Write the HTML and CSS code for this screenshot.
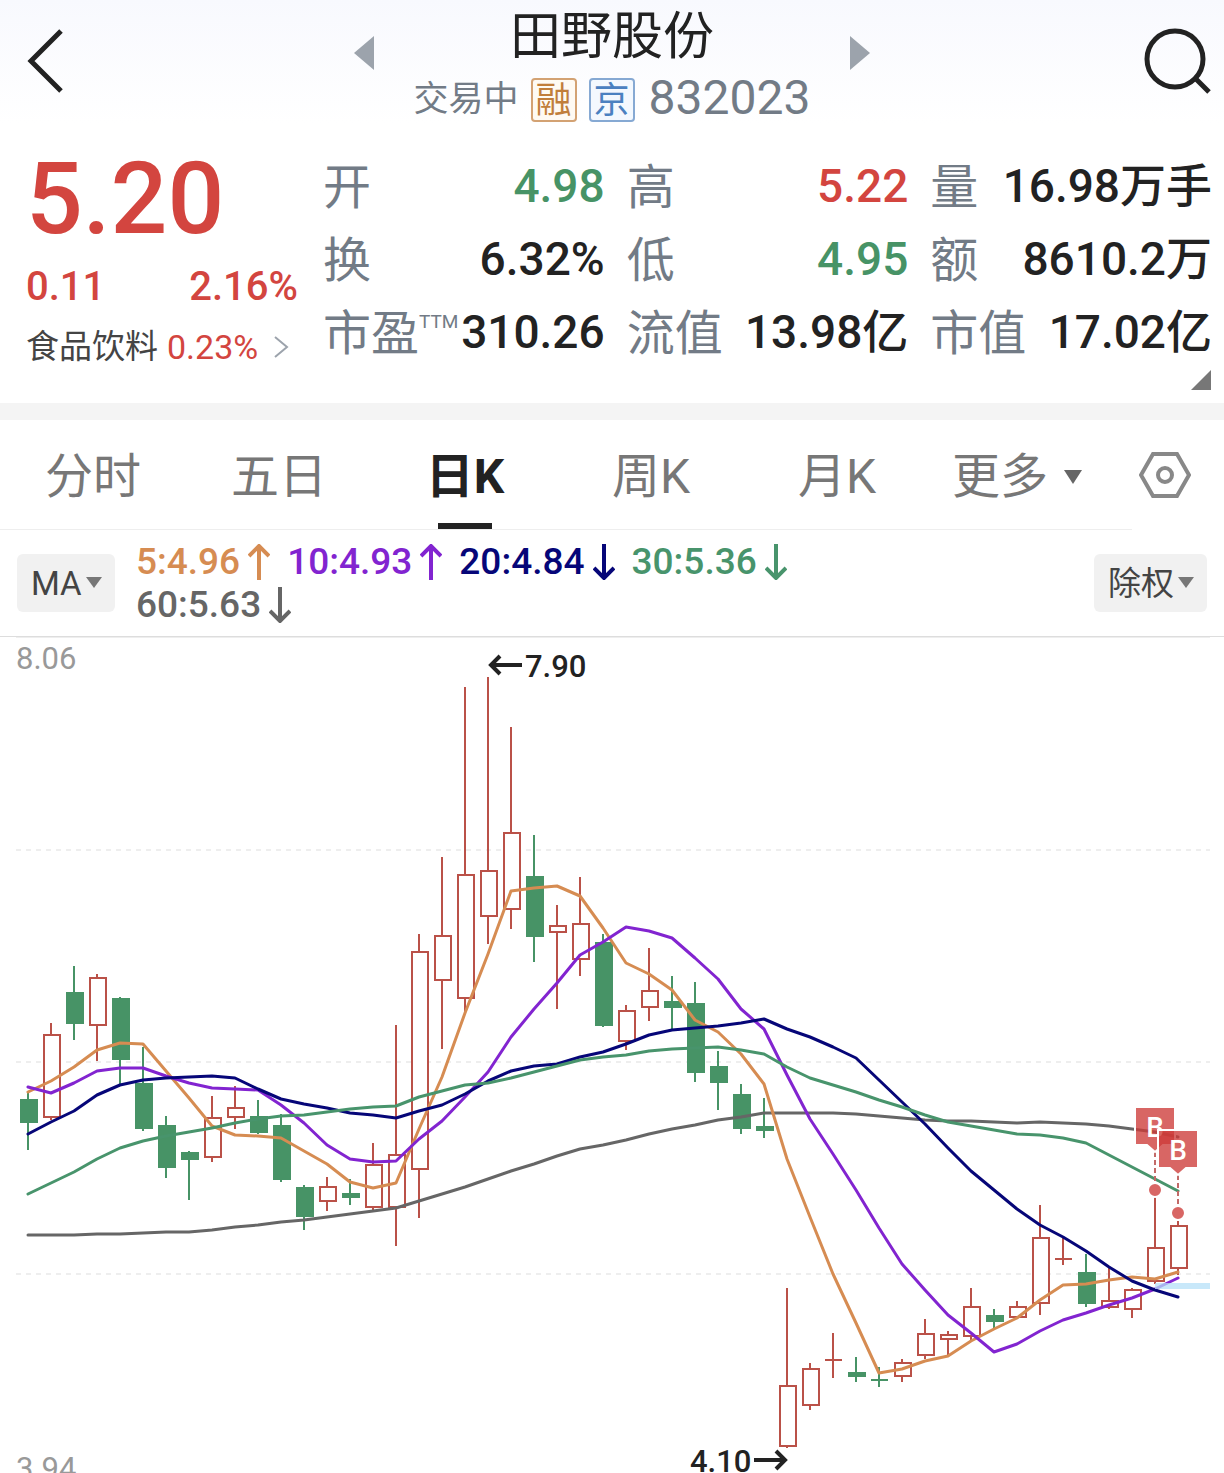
FILE: index.html
```html
<!DOCTYPE html>
<html lang="zh-CN">
<head>
  <meta charset="utf-8">
  <meta name="viewport" content="width=device-width, initial-scale=1">
  <title>田野股份 832023</title>
  <link rel="stylesheet" href="styles.css">
</head>
<body>
  <header class="header">
    <button class="back" aria-label="返回">
      <svg width="40" height="66" viewBox="0 0 40 66"><path d="M35 2 5 32l30 30"/></svg>
    </button>
    <div class="stock">
      <button class="switch" aria-label="上一只">
        <svg width="20" height="34" viewBox="0 0 20 34"><path d="M20 0v34L0 17z"/></svg>
      </button>
      <div class="stock-info">
        <h1>田野股份</h1>
        <div class="stock-meta">
          <span class="status">交易中</span>
          <span class="badge badge-margin">融</span>
          <span class="badge badge-market">京</span>
          <span class="code">832023</span>
        </div>
      </div>
      <button class="switch" aria-label="下一只">
        <svg width="20" height="34" viewBox="0 0 20 34"><path d="M0 0v34l20-17z"/></svg>
      </button>
    </div>
    <button class="search" aria-label="搜索">
      <svg width="68" height="68" viewBox="0 0 68 68"><circle cx="31" cy="31" r="28"/><path d="m51 50 14 14"/></svg>
    </button>
  </header>

  <section class="quote">
    <div class="price">
      <div class="price-now">5.20</div>
      <div class="price-change"><span>0.11</span><span>2.16%</span></div>
      <a class="industry" href="#industry">
        <span>食品饮料</span>
        <span class="industry-rate">0.23%</span>
        <svg width="16" height="24" viewBox="0 0 16 24"><path d="m2 2 12 10L2 22"/></svg>
      </a>
    </div>
    <dl class="stats">
      <div class="stat"><dt>开</dt><dd class="down">4.98</dd></div>
      <div class="stat"><dt>高</dt><dd class="up">5.22</dd></div>
      <div class="stat"><dt>量</dt><dd>16.98万手</dd></div>
      <div class="stat"><dt>换</dt><dd>6.32%</dd></div>
      <div class="stat"><dt>低</dt><dd class="down">4.95</dd></div>
      <div class="stat"><dt>额</dt><dd>8610.2万</dd></div>
      <div class="stat"><dt>市盈<sup>TTM</sup></dt><dd>310.26</dd></div>
      <div class="stat"><dt>流值</dt><dd>13.98亿</dd></div>
      <div class="stat"><dt>市值</dt><dd>17.02亿</dd></div>
    </dl>
  </section>
  <div class="expand">
    <button aria-label="展开">
      <svg width="20" height="20" viewBox="0 0 20 20"><path d="M20 0v20H0z"/></svg>
    </button>
  </div>

  <nav class="periods">
    <div class="tabs">
      <button class="tab">分时</button>
      <button class="tab">五日</button>
      <button class="tab active">日K</button>
      <button class="tab">周K</button>
      <button class="tab">月K</button>
      <button class="tab more" aria-haspopup="true">更多
        <svg width="18" height="14" viewBox="0 0 18 14"><path d="M0 0h18L9 14z"/></svg>
      </button>
    </div>
    <button class="settings" aria-label="设置">
      <svg width="52" height="46" viewBox="0 0 52 46"><path d="M14 2h24l12 21-12 21H14L2 23z"/><circle cx="26" cy="23" r="7"/></svg>
    </button>
  </nav>

  <section class="indicators">
    <div class="picker">
      <select aria-label="指标"><option>MA</option></select>
      <svg width="16" height="11" viewBox="0 0 16 11"><path d="M0 0h16L8 11z"/></svg>
    </div>
    <ul class="averages">
      <li class="ma5">5:4.96<svg class="arrow" viewBox="0 0 22 36"><path d="M11 36V2M1 12 11 2l10 10"/></svg></li>
      <li class="ma10">10:4.93<svg class="arrow" viewBox="0 0 22 36"><path d="M11 36V2M1 12 11 2l10 10"/></svg></li>
      <li class="ma20">20:4.84<svg class="arrow" viewBox="0 0 22 36"><path d="M11 0v34M1 24l10 10 10-10"/></svg></li>
      <li class="ma30">30:5.36<svg class="arrow" viewBox="0 0 22 36"><path d="M11 0v34M1 24l10 10 10-10"/></svg></li>
      <li class="ma60">60:5.63<svg class="arrow" viewBox="0 0 22 36"><path d="M11 0v34M1 24l10 10 10-10"/></svg></li>
    </ul>
    <div class="picker">
      <select aria-label="复权"><option>除权</option></select>
      <svg width="16" height="11" viewBox="0 0 16 11"><path d="M0 0h16L8 11z"/></svg>
    </div>
  </section>

  <svg class="chart" viewBox="0 637 1224 836">
    <path class="frame" d="M16 637.5h1194"/>
    <path class="grid" d="M16 850h1194M16 1062h1194M16 1274h1194"/>
    <g id="candles"></g>
    <g id="lines"></g>
    <rect class="last-price" x="1155" y="1283" width="55" height="6"/>
    <g id="markers"></g>
    <text class="axis" x="16" y="669">8.06</text>
    <text class="axis" x="16" y="1479">3.94</text>
    <text class="extreme" x="525" y="677">7.90</text>
    <path class="pointer" d="M522 665h-31m9-9-9 9 9 9"/>
    <text class="extreme" x="690" y="1472">4.10</text>
    <path class="pointer" d="M754 1460h31m-9-9 9 9-9 9"/>
  </svg>
  <script src="chart.js"></script>
</body>
</html>
```
FILE: styles.css
```css
:root {
  --up: #d3453f;
  --down: #479366;
  --ink: #222;
  --label: #727b86;
  --muted: #777;
}

* {
  box-sizing: border-box;
}

body {
  margin: 0;
  background: #fff;
  color: var(--ink);
  font-family: Roboto, "Noto Sans CJK SC", sans-serif;
}

button,
select {
  border: none;
  background: none;
  padding: 0;
  margin: 0;
  font: inherit;
  color: inherit;
  cursor: pointer;
}

svg {
  display: block;
  flex: none;
}

/* header */
.header {
  display: grid;
  grid-template-columns: 1fr auto 1fr;
  align-items: center;
  padding: 0 12px 0 26px;
  background: linear-gradient(#f8f9fe, #fff);
}

.back,
.search {
  fill: none;
  stroke: var(--ink);
  stroke-width: 5px;
}

.back {
  justify-self: start;
}

.search {
  justify-self: end;
}

.stock {
  display: flex;
  gap: 40px;
  padding-top: 8px;
  margin-right: 14px;
  justify-self: center;
}

.switch {
  align-self: flex-start;
  padding-top: 28px;
  fill: #9ca3ac;
}

.stock-info {
  text-align: center;
}

h1 {
  margin: 0 0 10px;
  font-size: 51px;
  font-weight: 400;
  line-height: 58px;
}

.stock-meta {
  display: flex;
  align-items: center;
  gap: 12px;
  height: 48px;
  color: var(--label);
}

.status {
  font-size: 35px;
  line-height: 44px;
}

.badge {
  width: 46px;
  height: 44px;
  border: 2px solid;
  border-radius: 4px;
  font-size: 36px;
  line-height: 42px;
}

.badge-margin {
  color: #c17e3b;
  border-color: #d3a273;
  background: #fefaf3;
}

.badge-market {
  color: #4a80c0;
  border-color: #86a9d3;
  background: #f3f8fe;
}

.code {
  align-self: flex-start;
  margin-left: 2px;
  font-size: 48px;
  line-height: 44px;
}

/* quote */
.quote {
  display: flex;
  gap: 25px;
  padding: 27px 12px 0 26px;
}

.price {
  width: 272px;
  color: var(--up);
}

.price-now {
  font-size: 100px;
  font-weight: 500;
  line-height: 96px;
}

.price-change {
  display: flex;
  justify-content: space-between;
  margin: 12px 0;
  font-size: 40px;
  font-weight: 500;
  line-height: 56px;
}

.industry {
  display: flex;
  align-items: center;
  gap: 9px;
  color: #444;
  font-size: 33px;
  line-height: 40px;
  text-decoration: none;
}

.industry-rate {
  color: var(--up);
  font-size: 34px;
}

.industry svg {
  margin-left: 6px;
  fill: none;
  stroke: #9ca3ac;
  stroke-width: 2px;
}

.stats {
  flex: 1;
  display: grid;
  grid-template-columns: repeat(3, minmax(0, 1fr));
  column-gap: 22px;
  margin: 0;
}

.stat {
  display: flex;
  justify-content: space-between;
  font-size: 48px;
  line-height: 73px;
  white-space: nowrap;
}

.stat dt {
  display: flex;
  color: var(--label);
}

.stat sup {
  font-size: 19px;
  line-height: 49px;
}

.stat dd {
  margin: 0;
  font-size: 46px;
  font-weight: 500;
  line-height: 71px;
}

.stat .up {
  color: var(--up);
}

.stat .down {
  color: var(--down);
}

.expand {
  display: flex;
  justify-content: flex-end;
  padding: 0 13px 13px;
  border-bottom: 17px solid #f4f4f4;
  fill: #777;
}

/* period tabs */
.periods {
  display: flex;
  align-items: center;
}

.tabs {
  flex: 1;
  display: grid;
  grid-template-columns: repeat(6, minmax(0, 1fr));
  padding-right: 16px;
  border-bottom: 1px solid #eee;
}

.tab {
  position: relative;
  height: 109px;
  padding-top: 4px;
  color: var(--muted);
  font-size: 48px;
  line-height: 72px;
}

.tab.active {
  color: var(--ink);
  font-weight: 700;
}

.tab.active::after {
  content: "";
  position: absolute;
  bottom: 0;
  left: 50%;
  width: 54px;
  height: 6px;
  margin-left: -27px;
  background: var(--ink);
}

.more {
  display: flex;
  align-items: center;
  justify-content: center;
  gap: 16px;
  padding-right: 12px;
  fill: #666;
}

.settings {
  padding: 0 33px 0 7px;
  fill: none;
  stroke: #888;
  stroke-width: 4px;
}

/* moving averages */
.indicators {
  display: flex;
  align-items: center;
  gap: 21px;
  height: 107px;
  padding: 0 17px;
  border-bottom: 1px solid #ddd;
}

.picker {
  position: relative;
}

.picker select {
  appearance: none;
  height: 58px;
  padding: 0 33px 0 14px;
  border-radius: 6px;
  background: #f1f1f1;
  color: #444;
  font-size: 33px;
}

.picker svg {
  position: absolute;
  top: 23px;
  right: 13px;
  fill: #777;
  pointer-events: none;
}

.averages {
  flex: 1;
  display: flex;
  flex-wrap: wrap;
  column-gap: 17px;
  margin: 0;
  padding: 0 200px 0 0;
  list-style: none;
  font-size: 37px;
  font-weight: 500;
  line-height: 43px;
}

.averages li {
  display: flex;
  align-items: center;
  gap: 8px;
}

.arrow {
  width: 22px;
  height: 36px;
  fill: none;
  stroke: currentColor;
  stroke-width: 4px;
}

.ma5 { color: #d68c52; }
.ma10 { color: #8224d0; }
.ma20 { color: #060678; }
.ma30 { color: #48946c; }
.ma60 { color: #666; }

/* chart */
.chart {
  width: 100%;
  stroke-width: 2px;
}

.chart .frame {
  stroke: #eee;
  stroke-width: 1px;
}

.chart .grid {
  stroke: #eee;
  stroke-dasharray: 5 5;
}

.candle-up {
  fill: #fff;
  stroke: #ba5148;
}

.candle-down {
  fill: var(--down);
  stroke: var(--down);
}

.chart polyline {
  fill: none;
  stroke: currentColor;
  stroke-width: 3px;
  stroke-linejoin: round;
  stroke-linecap: round;
}

.last-price {
  fill: #b5e0f8;
  opacity: 0.75;
}

.marker-flag {
  fill: #cd3b38;
  fill-opacity: 0.78;
  stroke: #fff;
}

.marker-line {
  stroke: #c26a68;
  stroke-dasharray: 5 3;
}

.marker-text {
  fill: #fff;
  font-size: 28px;
  font-weight: 500;
  text-anchor: middle;
}

.axis,
.extreme {
  font-size: 31px;
}

.axis {
  fill: #999;
}

.extreme {
  fill: var(--ink);
  font-weight: 500;
}

.pointer {
  fill: none;
  stroke: var(--ink);
  stroke-width: 4px;
}
```
FILE: chart.js
```js
const SVG_NS = 'http://www.w3.org/2000/svg';
const START = 28;
const STEP = 23;

// [direction, high, body top, body bottom, low] in chart units
const candles = [
  ['d', 1092, 1099, 1122, 1150], ['u', 1023, 1034, 1117, 1120], ['d', 966, 992, 1023, 1040],
  ['u', 974, 977, 1025, 1061], ['d', 997, 998, 1059, 1084], ['d', 1047, 1083, 1128, 1131],
  ['d', 1116, 1125, 1167, 1178], ['d', 1151, 1152, 1159, 1200], ['u', 1096, 1117, 1157, 1162],
  ['u', 1086, 1107, 1117, 1129], ['d', 1100, 1116, 1132, 1134], ['d', 1114, 1125, 1179, 1182],
  ['d', 1185, 1187, 1216, 1230], ['u', 1177, 1186, 1201, 1211], ['d', 1179, 1193, 1197, 1205],
  ['u', 1143, 1164, 1207, 1212], ['u', 1025, 1154, 1207, 1246], ['u', 934, 951, 1169, 1218],
  ['u', 857, 935, 980, 1049], ['u', 687, 874, 998, 1012], ['u', 677, 870, 916, 944],
  ['u', 727, 832, 909, 929], ['d', 835, 876, 936, 962], ['u', 905, 925, 932, 1009],
  ['u', 877, 923, 959, 976], ['d', 934, 942, 1025, 1027], ['u', 1005, 1010, 1041, 1050],
  ['u', 948, 990, 1007, 1021], ['d', 976, 1001, 1007, 1029], ['d', 982, 1003, 1072, 1082],
  ['d', 1051, 1066, 1082, 1110], ['d', 1084, 1094, 1128, 1134], ['d', 1098, 1126, 1130, 1138],
  ['u', 1288, 1385, 1446, 1448], ['u', 1363, 1368, 1405, 1410], ['u', 1333, 1360, 1360, 1378],
  ['d', 1357, 1372, 1376, 1382], ['d', 1367, 1380, 1380, 1387], ['u', 1359, 1362, 1376, 1382],
  ['u', 1319, 1333, 1355, 1359], ['u', 1331, 1334, 1339, 1356], ['u', 1288, 1306, 1336, 1340],
  ['d', 1309, 1315, 1321, 1330], ['u', 1301, 1306, 1317, 1319], ['u', 1205, 1237, 1303, 1315],
  ['u', 1237, 1259, 1259, 1265], ['d', 1254, 1272, 1303, 1307], ['u', 1268, 1300, 1307, 1309],
  ['u', 1288, 1289, 1309, 1318], ['u', 1197, 1247, 1281, 1284], ['u', 1221, 1225, 1268, 1275]
];

const averages = {
  ma60: [1235, 1235, 1235, 1234, 1234, 1233, 1232, 1232, 1230, 1227, 1225, 1222, 1220, 1217, 1214, 1211, 1208,
    1201, 1194, 1187, 1179, 1171, 1164, 1156, 1149, 1145, 1140, 1134, 1129, 1125, 1120, 1117, 1113, 1113,
    1113, 1113, 1114, 1116, 1118, 1120, 1121, 1121, 1122, 1123, 1122, 1123, 1124, 1126, 1129, 1132, 1137],
  ma5: [1092, 1081, 1067, 1050, 1043, 1044, 1071, 1098, 1126, 1135, 1136, 1138, 1151, 1164, 1182, 1188, 1183,
    1129, 1077, 1013, 954, 891, 888, 886, 896, 928, 963, 974, 990, 1020, 1032, 1054, 1084, 1159,
    1217, 1274, 1323, 1373, 1369, 1361, 1356, 1341, 1329, 1318, 1300, 1285, 1284, 1280, 1277, 1279, 1272],
  ma10: [1087, 1093, 1083, 1071, 1068, 1068, 1076, 1083, 1088, 1089, 1090, 1105, 1123, 1145, 1159, 1162, 1161,
    1139, 1121, 1097, 1072, 1037, 1009, 983, 955, 942, 927, 931, 938, 958, 979, 1009, 1029, 1075,
    1119, 1154, 1190, 1228, 1264, 1290, 1315, 1333, 1352, 1344, 1331, 1320, 1313, 1305, 1298, 1289, 1278],
  ma20: [1134, 1122, 1111, 1095, 1085, 1080, 1078, 1077, 1076, 1078, 1089, 1099, 1104, 1108, 1113, 1115, 1118,
    1111, 1105, 1094, 1081, 1071, 1066, 1064, 1057, 1052, 1044, 1035, 1030, 1028, 1026, 1023, 1019, 1029,
    1037, 1047, 1058, 1080, 1102, 1124, 1148, 1171, 1190, 1209, 1225, 1237, 1251, 1267, 1281, 1290, 1297],
  ma30: [1194, 1183, 1172, 1159, 1148, 1141, 1136, 1132, 1128, 1123, 1119, 1116, 1115, 1112, 1109, 1107, 1106,
    1097, 1091, 1085, 1083, 1078, 1072, 1066, 1060, 1057, 1055, 1051, 1049, 1048, 1047, 1050, 1054, 1067,
    1078, 1085, 1092, 1100, 1107, 1115, 1122, 1126, 1130, 1134, 1135, 1138, 1143, 1155, 1167, 1179, 1191]
};

// buy points: candle index and top of the flag
const buys = [[49, 1107], [50, 1130]];

function draw(parent, tag, attrs, text) {
  const el = document.createElementNS(SVG_NS, tag);
  for (const name in attrs) el.setAttribute(name, attrs[name]);
  if (text) el.textContent = text;
  document.getElementById(parent).appendChild(el);
}

const xOf = (i) => START + STEP * i;

candles.forEach(([dir, high, top, bottom, low], i) => {
  const x = xOf(i);
  const cls = dir === 'u' ? 'candle-up' : 'candle-down';
  draw('candles', 'path', { class: cls, d: `M${x} ${high}V${low}` });
  if (top === bottom) {
    draw('candles', 'path', { class: cls, d: `M${x - 8} ${top}h17` });
  } else {
    // the outline adds a pixel on each side
    draw('candles', 'rect', { class: cls, x: x - 7, y: top + 1, width: 16, height: bottom - top - 1 });
  }
});

for (const name in averages) {
  const points = averages[name].map((y, i) => `${xOf(i)},${y}`).join(' ');
  draw('lines', 'polyline', { class: name, points });
}

buys.forEach(([i, y]) => {
  const x = xOf(i);
  draw('markers', 'path', { class: 'marker-line', d: `M${x} ${y + 45}v32` });
  draw('markers', 'circle', { class: 'marker-flag', cx: x, cy: y + 83, r: 7 });
  draw('markers', 'path', { class: 'marker-flag', d: `M${x - 20} ${y}h40v38h-12l-8 7-8-7h-12z` });
  draw('markers', 'text', { class: 'marker-text', x, y: y + 30 }, 'B');
});
```
